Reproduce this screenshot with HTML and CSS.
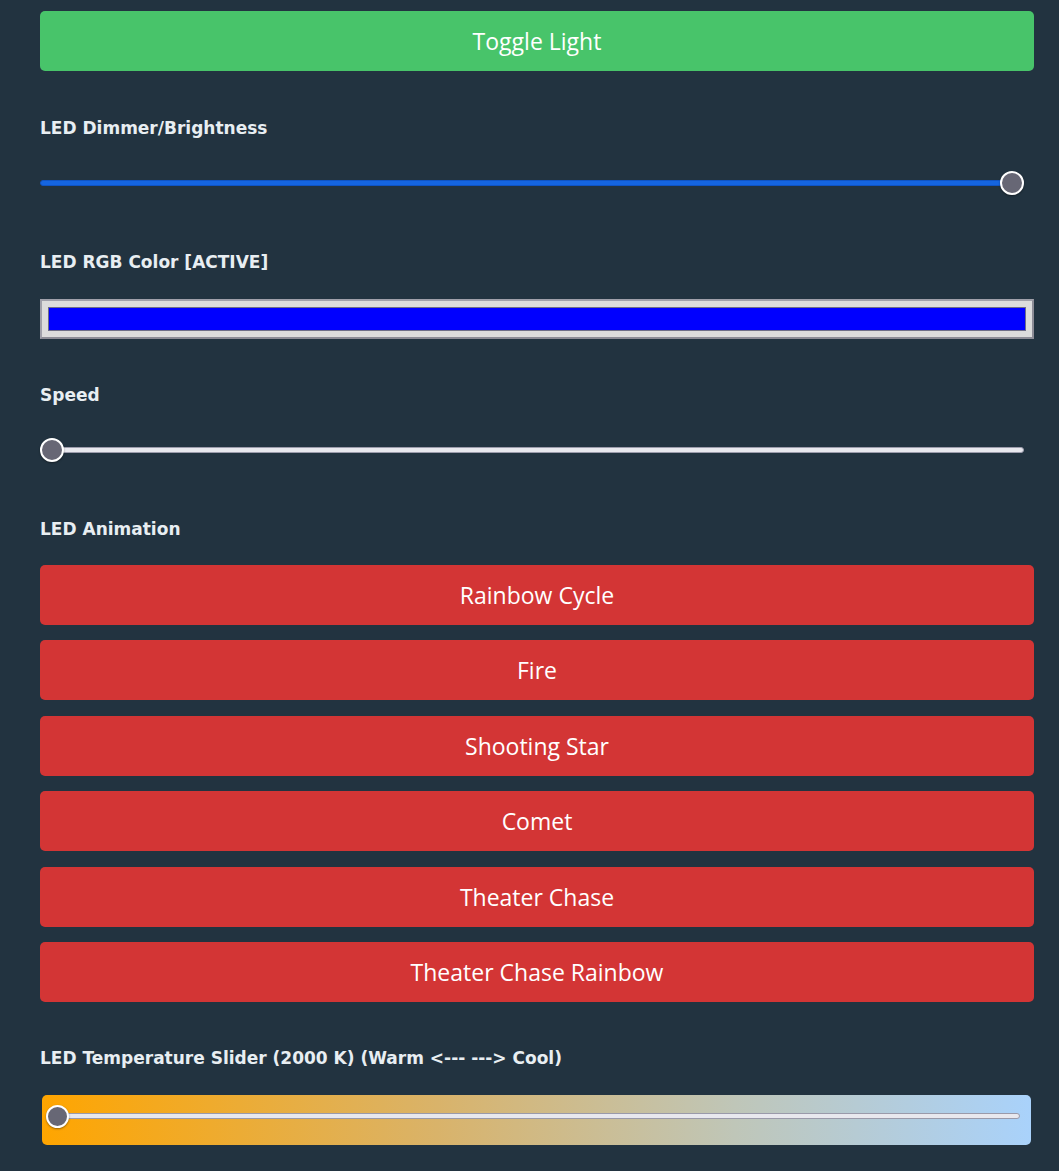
FILE: index.html
```html
<!DOCTYPE html>
<html>
<head>
<meta charset="utf-8">
<link rel="stylesheet" href="styles.css">
</head>
<body>
<div class="container">
  <button class="btn btn-green">Toggle Light</button>

  <div class="label label-first">LED Dimmer/Brightness</div>
  <div class="slider-row">
    <div class="track track-blue"></div>
    <div class="thumb thumb-end"></div>
  </div>

  <div class="label label-after-slider">LED RGB Color [ACTIVE]</div>
  <div class="color-input"><div class="swatch"></div></div>

  <div class="label label-after-block">Speed</div>
  <div class="slider-row">
    <div class="track track-light"></div>
    <div class="thumb thumb-start"></div>
  </div>

  <div class="label label-after-slider label-tight">LED Animation</div>
  <div class="btn-list">
    <button class="btn btn-red">Rainbow Cycle</button>
    <button class="btn btn-red">Fire</button>
    <button class="btn btn-red">Shooting Star</button>
    <button class="btn btn-red">Comet</button>
    <button class="btn btn-red">Theater Chase</button>
    <button class="btn btn-red">Theater Chase Rainbow</button>
  </div>

  <div class="label label-after-block">LED Temperature Slider (2000 K) (Warm &lt;--- ---&gt; Cool)</div>
  <div class="temp-box">
    <div class="temp-slider">
      <div class="track track-temp"></div>
      <div class="thumb thumb-temp"></div>
    </div>
  </div>
</div>
</body>
</html>
```

FILE: styles.css
```css
html, body {
  margin: 0;
  padding: 0;
  background: #223340;
}
.container {
  width: 994px;
  padding: 11px 0 30px 40px;
  display: flex;
  flex-direction: column;
}
.btn {
  display: block;
  width: 100%;
  height: 60px;
  border: none;
  border-radius: 5px;
  color: #ffffff;
  font-family: "Open Sans", "Noto Sans", sans-serif;
  font-size: 23px;
  padding: 0;
  margin: 0;
}
.btn-green { background: #48c46a; }
.btn-red { background: #d33535; }
.btn-list {
  display: flex;
  flex-direction: column;
  gap: 15.4px;
}
.label {
  font-family: "DejaVu Sans", Verdana, sans-serif;
  font-weight: bold;
  font-size: 17px;
  line-height: 18px;
  color: #e8eef2;
  margin-bottom: 28px;
}
.label-first { margin-top: 48px; }
.label-after-slider { margin-top: 52px; }
.label-after-block { margin-top: 47px; }
.label-tight { margin-bottom: 27px; }

.slider-row {
  position: relative;
  height: 36px;
}
.track {
  position: absolute;
  left: 0;
  top: 50%;
  height: 6px;
  margin-top: -3px;
  border-radius: 3px;
  box-sizing: border-box;
}
.track-blue {
  right: 10px;
  background: #1565e0;
  border: 1px solid #0f54c4;
}
.track-light {
  right: 10px;
  background: #e8e8ee;
  border: 1px solid #9c9cac;
}
.thumb {
  position: absolute;
  top: 50%;
  width: 24px;
  height: 24px;
  margin-top: -12px;
  box-sizing: border-box;
  border-radius: 50%;
  background: #676775;
  border: 2px solid #ffffff;
  box-shadow: 0 1px 2px rgba(0,0,0,0.4);
}
.thumb-end { left: 960px; }
.thumb-start { left: 0; }

.color-input {
  height: 40px;
  box-sizing: border-box;
  background: #dcdcdc;
  border: 2px solid #8c8c96;
  border-top-color: #a0a0aa;
  border-left-color: #a0a0aa;
  padding: 6px 6px;
}
.swatch {
  height: 100%;
  box-sizing: border-box;
  background: #0000ff;
  border: 1px solid #6e6e88;
}

.temp-box {
  margin-left: 2px;
  width: 989px;
  height: 50px;
  border-radius: 5px;
  background: linear-gradient(to right, #ffa500 0%, #d9b36a 40%, #bfc6b8 70%, #a9d2fb 100%);
  box-sizing: border-box;
  padding: 10px 11px 0 4px;
}
.temp-slider {
  position: relative;
  height: 22px;
}
.track-temp {
  right: 0;
  background: #e8e8ee;
  border: 1px solid #9a9aaa;
}
.thumb-temp {
  left: 0;
  width: 23px;
  height: 23px;
  margin-top: -11px;
}
```
